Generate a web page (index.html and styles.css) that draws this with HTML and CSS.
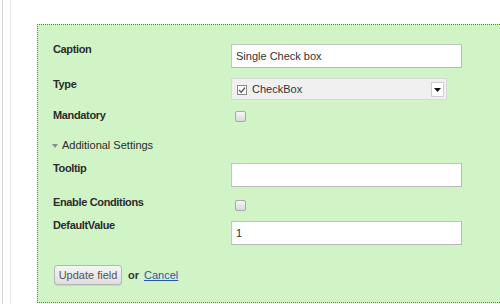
FILE: index.html
```html
<!DOCTYPE html>
<html>
<head>
<meta charset="utf-8">
<link rel="stylesheet" href="styles.css">
</head>
<body>
<div class="page">
  <div class="inner">
    <div class="box">
      <div class="row r-caption">
        <div class="label">Caption</div>
        <div class="input">Single Check box</div>
      </div>
      <div class="row r-type">
        <div class="label">Type</div>
        <div class="select">
          <svg class="cb-icon" width="10" height="10" viewBox="0 0 10 10"><rect x="0.5" y="0.5" width="9" height="9" fill="#fafafa" stroke="#8a8a8a"/><path d="M2 5 L4.2 7.2 L8 2.6" fill="none" stroke="#555" stroke-width="1.3"/></svg>
          <span class="sel-text">CheckBox</span>
          <span class="sel-btn"><svg width="7" height="4" viewBox="0 0 7 4"><path d="M0 0 H7 L3.5 4 Z" fill="#111"/></svg></span>
        </div>
      </div>
      <div class="row r-mand">
        <div class="label">Mandatory</div>
        <div class="check"></div>
      </div>
      <div class="row r-add">
        <span class="tri"></span><span class="add-text">Additional Settings</span>
      </div>
      <div class="row r-tooltip">
        <div class="label">Tooltip</div>
        <div class="input"></div>
      </div>
      <div class="row r-cond">
        <div class="label">Enable Conditions</div>
        <div class="check"></div>
      </div>
      <div class="row r-def">
        <div class="label">DefaultValue</div>
        <div class="input">1</div>
      </div>
      <div class="row r-actions">
        <button class="btn">Update field</button>
        <span class="or">or</span>
        <a class="cancel" href="#">Cancel</a>
      </div>
    </div>
  </div>
</div>
</body>
</html>
```
FILE: styles.css
```css
html, body {
  margin: 0;
  padding: 0;
  background: #fff;
  overflow: hidden;
  width: 500px;
  height: 304px;
}
body {
  font-family: "Liberation Sans", Arial, sans-serif;
  font-size: 11px;
  color: #333;
}
.page {
  margin-left: 2px;
  border-left: 1px solid #d6d6d6;
  padding-left: 7px;
  height: 304px;
}
.inner {
  border-left: 1px solid #e8e8e8;
  padding-left: 26px;
  padding-top: 24px;
  height: 280px;
}
.box {
  height: 279px;
  box-sizing: border-box;
  border: 1px dotted #4c9428;
  border-right: none;
  background: #d1f4c6;
  padding: 19px 0 0 15px;
}
.row {
  display: flex;
  align-items: flex-start;
}
.label {
  width: 178px;
  flex: none;
  font-weight: bold;
  line-height: 13px;
  letter-spacing: -0.35px;
  color: #2b2b2b;
  margin-top: -1px;
}
.input {
  width: 231px;
  height: 24px;
  box-sizing: border-box;
  background: #fff;
  border: 1px solid #c4c4c4;
  border-right-color: #b8b8b8;
  border-bottom-color: #b8b8b8;
  padding-left: 4px;
  line-height: 22px;
  color: #333;
}
.r-type { margin-top: 10px; }
.r-type .label { margin-top: 0; }
.select {
  width: 216px;
  height: 22px;
  box-sizing: border-box;
  background: #f0f0f0;
  border: 1px solid #d8d8d8;
  display: flex;
  align-items: center;
  padding-left: 5px;
  padding-right: 2px;
}
.cb-icon { flex: none; margin-top: 1px; }
.sel-text { margin-left: 5px; flex: 1; color: #333; }
.sel-btn {
  width: 13px;
  height: 15px;
  box-sizing: border-box;
  background: #fff;
  border: 1px solid #cfcfcf;
  display: flex;
  align-items: center;
  justify-content: center;
  margin-top: 1px;
}
.r-mand { margin-top: 10px; height: 13px; }
.check {
  width: 11px;
  height: 11px;
  box-sizing: border-box;
  margin-left: 4px;
  margin-top: 1px;
  border: 1px solid #a9a9a9;
  border-radius: 2px;
  background: linear-gradient(#f6f6f6, #d9d9d9);
}
.r-add {
  margin-top: 16px;
  height: 13px;
  align-items: center;
  margin-left: -1px;
}
.tri {
  width: 0;
  height: 0;
  border-left: 3px solid transparent;
  border-right: 3px solid transparent;
  border-top: 4px solid #8c8c8c;
  margin-right: 4px;
}
.add-text { line-height: 13px; color: #2b2b2b; }
.r-tooltip { margin-top: 11px; }
.r-cond { margin-top: 11px; height: 14px; }
.r-cond .label { margin-top: -2px; }
.r-cond .check { margin-top: 2px; }
.r-def { margin-top: 9px; }
.r-def .label { margin-top: -2px; }
.r-actions {
  margin-top: 20px;
  align-items: center;
  margin-left: 1px;
}
.btn {
  font-family: "Liberation Sans", Arial, sans-serif;
  font-size: 11px;
  color: #555;
  height: 20px;
  width: 68px;
  padding: 0;
  border: 1px solid #b5b5b5;
  border-radius: 3px;
  background: linear-gradient(#f5f5f5, #dedede);
  box-shadow: 0 1px 0 rgba(0,0,0,0.08);
}
.or {
  margin-left: 6px;
  font-weight: bold;
  color: #333;
}
.cancel {
  margin-left: 5px;
  color: #2656b0;
  text-decoration: underline;
}
```
